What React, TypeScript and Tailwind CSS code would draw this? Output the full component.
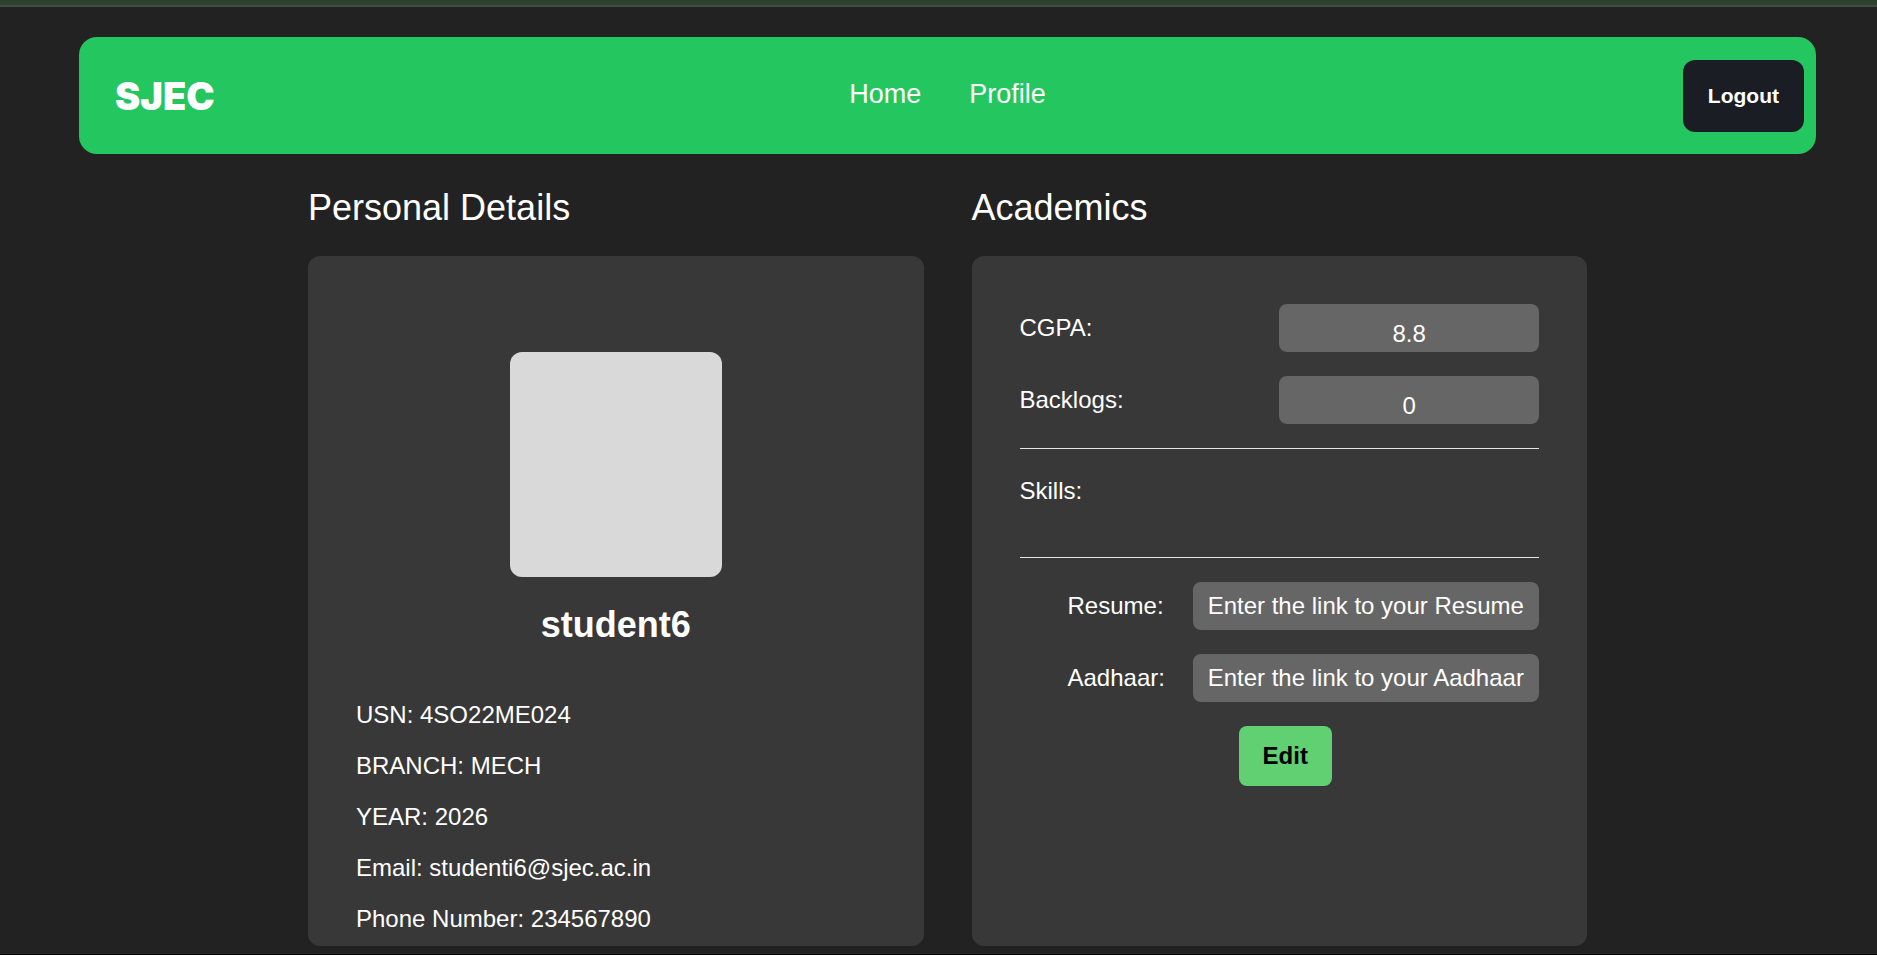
import React from "react";

interface Detail {
  label: string;
  value: string;
}

interface LinkField {
  id: string;
  label: string;
  placeholder: string;
}

const details: Detail[] = [
  { label: "USN", value: "4SO22ME024" },
  { label: "BRANCH", value: "MECH" },
  { label: "YEAR", value: "2026" },
  { label: "Email", value: "studenti6@sjec.ac.in" },
  { label: "Phone Number", value: "234567890" },
];

const scores: Detail[] = [
  { label: "CGPA", value: "8.8" },
  { label: "Backlogs", value: "0" },
];

const linkFields: LinkField[] = [
  { id: "resume", label: "Resume", placeholder: "Enter the link to your Resume" },
  { id: "aadhaar", label: "Aadhaar", placeholder: "Enter the link to your Aadhaar" },
];

const Navbar = () => {
  return (
    <header className="grid grid-cols-[1fr_auto_1fr] items-center rounded-[18px] bg-[#24c75f] px-3 pt-[23px] pb-[22px]">
      <span className="pl-6 font-['Inter',sans-serif] text-[38px] leading-12 font-black">SJEC</span>
      <nav className="flex gap-12 pb-1 text-[27px] leading-9">
        <a href="#home">Home</a>
        <a href="#profile">Profile</a>
      </nav>
      <button
        type="button"
        className="h-[72px] justify-self-end rounded-xl bg-[#1a1e24] px-[25px] text-[21px] leading-[26px] font-bold"
      >
        Logout
      </button>
    </header>
  );
};

const PersonalDetails = () => {
  return (
    <section className="flex flex-col">
      <h2 className="mb-6 text-[36px] leading-12">Personal Details</h2>
      <div className="grow rounded-xl bg-[#383838] px-12 pt-24 pb-[14px]">
        <div className="mx-auto h-[225px] w-[212px] rounded-xl bg-[#d9d9d9]"></div>
        <h3 className="mt-6 mb-[52px] text-center text-[36px] leading-12 font-bold">student6</h3>
        <div className="flex flex-col gap-6">
          {details.map((detail) => (
            <p key={detail.label}>
              {detail.label}: {detail.value}
            </p>
          ))}
        </div>
      </div>
    </section>
  );
};

const Academics = () => {
  return (
    <section className="flex flex-col">
      <h2 className="mb-6 text-[36px] leading-12">Academics</h2>
      <div className="flex grow flex-col gap-6 rounded-xl bg-[#383838] p-12">
        {scores.map((score) => (
          <div key={score.label} className="flex items-center justify-between">
            <label htmlFor={score.label} className="leading-[26px]">
              {score.label}:
            </label>
            <input
              id={score.label}
              type="text"
              readOnly
              value={score.value}
              className="h-12 w-1/2 rounded-lg bg-[#666666] pt-3 text-center outline-none"
            />
          </div>
        ))}
        <hr className="border-[#e5e5e5]" />
        <p className="pb-6 leading-9">Skills:</p>
        <hr className="border-[#e5e5e5]" />
        {linkFields.map((field) => (
          <div key={field.id} className="flex items-center justify-between">
            <label htmlFor={field.id} className="pl-12 leading-[26px]">
              {field.label}:
            </label>
            <input
              id={field.id}
              type="text"
              placeholder={field.placeholder}
              className="h-12 w-2/3 rounded-lg bg-[#666666] px-[15px] outline-none placeholder:text-white"
            />
          </div>
        ))}
        <div className="flex justify-center pl-3">
          <button
            type="button"
            className="h-[60px] rounded-lg bg-[#61d073] px-6 leading-[26px] font-bold text-black"
          >
            Edit
          </button>
        </div>
      </div>
    </section>
  );
};

const App = () => {
  return (
    <div className="flex min-h-screen flex-col border-b border-black bg-[#222222] font-['Liberation_Sans',Arial,sans-serif] text-[24px] leading-[27px] text-white">
      <div className="h-[7px] border-b-2 border-[#424d42] bg-[#2f4230]"></div>
      <div className="pt-[30px] pr-[61px] pb-2 pl-[79px]">
        <Navbar />
        <main className="mx-auto grid max-w-[1279px] grid-cols-2 gap-12 pt-[30px]">
          <PersonalDetails />
          <Academics />
        </main>
      </div>
    </div>
  );
};

export default App;
